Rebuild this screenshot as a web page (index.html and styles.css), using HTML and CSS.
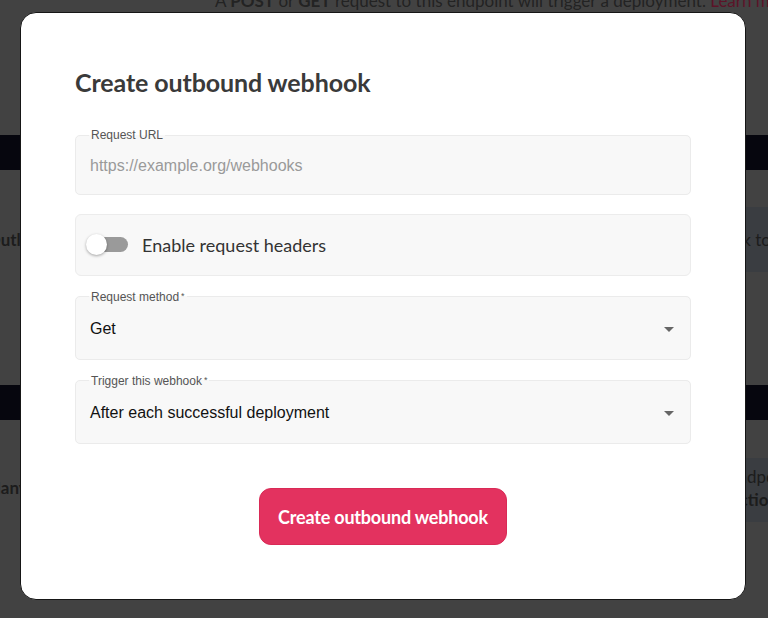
FILE: index.html
```html
<!DOCTYPE html>
<html lang="en">
<head>
<meta charset="utf-8">
<title>Create outbound webhook</title>
<link rel="stylesheet" href="styles.css">
</head>
<body>
<div class="page">
  <p class="intro">A <b>POST</b> or <b>GET</b> request to this endpoint will trigger a deployment. <span class="link">Learn more</span></p>
  <div class="band band-1"></div>
  <div class="row row-1">
    <span class="row-text">Outline</span>
    <span class="panel panel-1">Link to docs</span>
  </div>
  <div class="band band-2"></div>
  <div class="row row-2">
    <span class="row-text">Many</span>
    <span class="panel panel-2">Endpoint<br><b>Actions</b></span>
  </div>
</div>

<div class="overlay">
  <div class="modal">
    <h2 class="title">Create outbound webhook</h2>

    <fieldset class="field">
      <legend class="field-label">Request URL</legend>
      <div class="field-value url placeholder">https://example.org/webhooks</div>
    </fieldset>

    <div class="toggle-box">
      <span class="switch"><span class="track"></span><span class="thumb"></span></span>
      <span class="toggle-label">Enable request headers</span>
    </div>

    <fieldset class="field">
      <legend class="field-label">Request method<span class="req">*</span></legend>
      <div class="field-value select">Get<span class="caret"></span></div>
    </fieldset>

    <fieldset class="field">
      <legend class="field-label">Trigger this webhook<span class="req">*</span></legend>
      <div class="field-value select">After each successful deployment<span class="caret"></span></div>
    </fieldset>

    <div class="actions">
      <button class="btn" type="button">Create outbound webhook</button>
    </div>
  </div>
</div>
</body>
</html>
```
FILE: styles.css
```css
html, body {
  margin: 0;
  padding: 0;
}
body {
  width: 768px;
  height: 618px;
  overflow: hidden;
  background: #424242;
  font-family: "Liberation Sans", Arial, sans-serif;
}
.page {
  display: flex;
  flex-direction: column;
}
.intro {
  margin: -9px 0 0 215px;
  font-family: "Lato", sans-serif;
  font-size: 17px;
  line-height: 20px;
  color: #232323;
  white-space: nowrap;
}
.intro .link { color: #5c1328; }
.band {
  height: 35px;
  background: #06060e;
}
.band-1 { margin-top: 124px; }
.row {
  display: flex;
  justify-content: space-between;
  font-family: "Lato", sans-serif;
  font-weight: 700;
  color: #1c1c1c;
  font-size: 17px;
}
.row-1 { height: 215px; align-items: flex-start; padding-top: 37px; box-sizing: border-box; }
.row-1 .row-text { margin-left: -13px; margin-top: 22px; }
.panel {
  background: #3a3d41;
  color: #1c1c1c;
  font-weight: 400;
  box-sizing: border-box;
}
.panel-1 { height: 65px; width: 62px; padding: 22px 0 0 14px; white-space: nowrap; overflow: hidden; }
.row-2 { align-items: flex-start; padding-top: 38px; }
.row-2 .row-text { margin-left: -15px; margin-top: 19px; }
.panel-2 { height: 64px; width: 62px; padding: 7px 0 0 22px; line-height: 23px; white-space: nowrap; overflow: hidden; }

.overlay {
  position: fixed;
  inset: 0;
}
.modal {
  margin: 12px 0 0 20px;
  width: 726px;
  height: 588px;
  box-sizing: border-box;
  background: #fff;
  border: 1px solid #161616;
  border-radius: 16px;
  padding: 54px 54px 0 54px;
  display: flex;
  flex-direction: column;
}
.title {
  margin: 0 0 31px 0;
  font-family: "Lato", sans-serif;
  font-weight: 700;
  font-size: 25px;
  line-height: 30px;
  color: #3a3a3a;
  letter-spacing: -0.1px;
}
.field {
  margin: 0 0 13px 0;
  padding: 0 14px;
  border: 1px solid #ebebeb;
  border-radius: 5px;
  background: #f8f8f8;
  min-width: 0;
}
.field-label {
  padding: 0 2px;
  margin-left: -1px;
  font-size: 12px;
  line-height: 14px;
  color: #555;
}
.req { margin-left: 2px; font-size: 9px; vertical-align: 2px; }
.field-value {
  height: 55px;
  display: flex;
  align-items: center;
  font-size: 16px;
  color: #111;
  padding-bottom: 5px;
  box-sizing: border-box;
}
.field-value.url { height: 52px; padding-bottom: 4px; }
.field-trigger { margin-top: -1px; }
.placeholder { color: #9a9a9a; }
.select { justify-content: space-between; }
.caret {
  width: 0;
  height: 0;
  border-left: 5px solid transparent;
  border-right: 5px solid transparent;
  border-top: 5px solid #666;
  margin-right: 2px;
}
.toggle-box {
  height: 62px;
  box-sizing: border-box;
  border: 1px solid #ececec;
  border-radius: 6px;
  background: #f8f8f8;
  display: flex;
  align-items: center;
  padding-left: 10px;
  margin: 6px 0 13px 0;
}
.switch {
  position: relative;
  width: 42px;
  height: 22px;
  flex: none;
}
.track {
  position: absolute;
  left: 6px;
  top: 3px;
  width: 36px;
  height: 15px;
  border-radius: 8px;
  background: #9a9a9a;
}
.thumb {
  position: absolute;
  left: 0;
  top: 0;
  width: 21px;
  height: 21px;
  border-radius: 50%;
  background: #fff;
  box-shadow: 0 1px 3px rgba(0,0,0,0.35);
}
.toggle-label {
  margin-left: 14px;
  font-family: "Lato", sans-serif;
  font-size: 18px;
  color: #333;
}
.actions {
  display: flex;
  justify-content: center;
  margin-top: 31px;
}
.btn {
  width: 248px;
  height: 57px;
  border: 1px solid #d92a56;
  border-radius: 12px;
  background: #e3325f;
  color: #fff;
  font-family: "Lato", sans-serif;
  font-weight: 700;
  font-size: 18px;
  letter-spacing: -0.2px;
  padding: 0;
}
```
